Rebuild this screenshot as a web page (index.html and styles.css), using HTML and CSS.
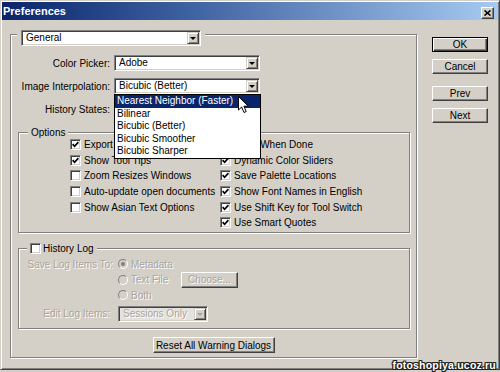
FILE: index.html
```html
<!DOCTYPE html>
<html lang="en">
<head>
    <meta charset="UTF-8">
    <title>Preferences</title>
    <link rel="stylesheet" href="styles.css">
</head>
<body>
    <div class="dialog">
        <div class="titlebar">
            <span class="title">Preferences</span>
            <span class="close">
                <svg width="7" height="6" viewBox="0 0 7 6"><path d="M0.5 0.5 L6.5 5.5 M6.5 0.5 L0.5 5.5" stroke="#000" stroke-width="1.6" fill="none"/></svg>
            </span>
        </div>
        <div class="content">
            <div class="frame">
                <div class="frame-head">
                    <div class="combo combo-general"><span class="combo-text">General</span><span class="combo-btn"></span></div>
                </div>
                <div class="form">
                    <div class="form-row">
                        <span class="form-label">Color Picker:</span>
                        <div class="combo combo-wide"><span class="combo-text">Adobe</span><span class="combo-btn"></span></div>
                    </div>
                    <div class="form-row">
                        <span class="form-label">Image Interpolation:</span>
                        <div class="combo combo-wide combo-open">
                            <span class="combo-text">Bicubic (Better)</span><span class="combo-btn"></span>
                            <ul class="droplist">
                                <li class="droplist-item is-selected">Nearest Neighbor (Faster)</li>
                                <li class="droplist-item">Bilinear</li>
                                <li class="droplist-item">Bicubic (Better)</li>
                                <li class="droplist-item">Bicubic Smoother</li>
                                <li class="droplist-item">Bicubic Sharper</li>
                            </ul>
                        </div>
                    </div>
                    <div class="form-row">
                        <span class="form-label">History States:</span>
                        <div class="field"></div>
                    </div>
                </div>

                <div class="group group-options">
                    <div class="legend">Options</div>
                    <div class="checks">
                        <div class="check-col">
                            <div class="check-item"><span class="check is-checked"><svg width="7" height="7" viewBox="0 0 7 7"><path d="M0.6 3.2 L2.6 5.3 L6.4 1.2" stroke="#000" stroke-width="1.7" fill="none"/></svg></span>Export Clipboard</div>
                            <div class="check-item"><span class="check is-checked"><svg width="7" height="7" viewBox="0 0 7 7"><path d="M0.6 3.2 L2.6 5.3 L6.4 1.2" stroke="#000" stroke-width="1.7" fill="none"/></svg></span>Show Tool Tips</div>
                            <div class="check-item"><span class="check"></span>Zoom Resizes Windows</div>
                            <div class="check-item"><span class="check"></span>Auto-update open documents</div>
                            <div class="check-item"><span class="check"></span>Show Asian Text Options</div>
                        </div>
                        <div class="check-col">
                            <div class="check-item"><span class="check is-checked"><svg width="7" height="7" viewBox="0 0 7 7"><path d="M0.6 3.2 L2.6 5.3 L6.4 1.2" stroke="#000" stroke-width="1.7" fill="none"/></svg></span>Beep When Done</div>
                            <div class="check-item"><span class="check is-checked"><svg width="7" height="7" viewBox="0 0 7 7"><path d="M0.6 3.2 L2.6 5.3 L6.4 1.2" stroke="#000" stroke-width="1.7" fill="none"/></svg></span>Dynamic Color Sliders</div>
                            <div class="check-item"><span class="check is-checked"><svg width="7" height="7" viewBox="0 0 7 7"><path d="M0.6 3.2 L2.6 5.3 L6.4 1.2" stroke="#000" stroke-width="1.7" fill="none"/></svg></span>Save Palette Locations</div>
                            <div class="check-item"><span class="check is-checked"><svg width="7" height="7" viewBox="0 0 7 7"><path d="M0.6 3.2 L2.6 5.3 L6.4 1.2" stroke="#000" stroke-width="1.7" fill="none"/></svg></span>Show Font Names in English</div>
                            <div class="check-item"><span class="check is-checked"><svg width="7" height="7" viewBox="0 0 7 7"><path d="M0.6 3.2 L2.6 5.3 L6.4 1.2" stroke="#000" stroke-width="1.7" fill="none"/></svg></span>Use Shift Key for Tool Switch</div>
                            <div class="check-item"><span class="check is-checked"><svg width="7" height="7" viewBox="0 0 7 7"><path d="M0.6 3.2 L2.6 5.3 L6.4 1.2" stroke="#000" stroke-width="1.7" fill="none"/></svg></span>Use Smart Quotes</div>
                        </div>
                    </div>
                </div>

                <div class="group group-log">
                    <div class="legend legend-check"><span class="check"></span>History Log</div>
                    <div class="log-grid">
                        <span class="log-label disabled">Save Log Items To:</span>
                        <div class="radio-list">
                            <div class="radio-item"><span class="radio is-on"></span><span class="radio-text disabled">Metadata</span></div>
                            <div class="radio-item"><span class="radio"></span><span class="radio-text disabled">Text File</span><span class="btn btn-choose disabled">Choose...</span></div>
                            <div class="radio-item"><span class="radio"></span><span class="radio-text disabled">Both</span></div>
                        </div>
                        <span class="log-label log-label-edit disabled">Edit Log Items:</span>
                        <div class="combo combo-log"><span class="combo-text disabled">Sessions Only</span><span class="combo-btn combo-btn-off"></span></div>
                    </div>
                </div>

                <div class="reset-row">
                    <span class="btn btn-reset">Reset All Warning Dialogs</span>
                </div>
            </div>

            <div class="side">
                <span class="btn btn-side btn-default">OK</span>
                <span class="btn btn-side">Cancel</span>
                <span class="btn btn-side btn-gap">Prev</span>
                <span class="btn btn-side">Next</span>
            </div>
        </div>

        <svg class="cursor" width="12" height="18" viewBox="0 0 12 18"><path d="M0.5 0.5 L0.5 14 L3.6 11 L6 16.5 L8.2 15.5 L5.9 10.2 L10.3 10.2 Z" fill="#fff" stroke="#000" stroke-width="1"/></svg>
        <div class="watermark">fotoshopiya.ucoz.ru</div>
    </div>
</body>
</html>
```

FILE: styles.css
```css
html, body {
    margin: 0;
    width: 500px;
    height: 372px;
    overflow: hidden;
}
body {
    background: #d4d0c8;
    font-family: "Liberation Sans", Arial, sans-serif;
    font-size: 10px;
    color: #000;
}
.dialog {
    position: relative;
    box-sizing: border-box;
    width: 500px;
    height: 370px;
    background: #d4d0c8;
    border: 1px solid;
    border-color: #d4d0c8 #404040 #404040 #d4d0c8;
    box-shadow: inset 1px 1px #fff, inset -1px -1px #808080;
}

/* title bar */
.titlebar {
    display: flex;
    align-items: center;
    height: 18px;
    margin: 1px 1px 0;
    padding: 0 4px 0 1px;
    background: linear-gradient(90deg, #0a246a 0%, #3a5d9e 35%, #a6caf0 100%);
}
.title {
    color: #fff;
    font-weight: bold;
    font-size: 11px;
}
.close {
    margin-left: auto;
    margin-top: 3px;
    box-sizing: border-box;
    width: 13px;
    height: 12px;
    display: flex;
    align-items: center;
    justify-content: center;
    background: #d4d0c8;
    border: 1px solid;
    border-color: #fff #404040 #404040 #fff;
    box-shadow: inset -1px -1px #808080;
}

.content {
    display: flex;
    padding: 14px 0 0 9px;
}

/* main group frame */
.frame {
    box-sizing: border-box;
    width: 407px;
    height: 324px;
    border: 1px solid #808080;
    box-shadow: inset 1px 1px #fff, 1px 1px #fff;
}
.frame-head {
    display: flex;
    margin-top: -5px;
    padding-left: 10px;
}

/* combo boxes */
.combo {
    position: relative;
    box-sizing: border-box;
    display: flex;
    align-items: center;
    height: 16px;
    padding: 1px;
    background: #fff;
    border: 1px solid;
    border-color: #808080 #fff #fff #808080;
    box-shadow: inset 1px 1px #404040, inset -1px -1px #d4d0c8;
}
.combo-general {
    width: 180px;
    outline: 4px solid #d4d0c8;
}
.combo-wide {
    width: 146px;
}
.combo-log {
    width: 90px;
    background: #e4e2dc;
}
.combo-text {
    padding-left: 3px;
    line-height: 12px;
    white-space: nowrap;
}
.combo-btn {
    margin-left: auto;
    box-sizing: border-box;
    width: 12px;
    height: 12px;
    display: flex;
    align-items: center;
    justify-content: center;
    background: #d4d0c8;
    border: 1px solid;
    border-color: #d4d0c8 #404040 #404040 #d4d0c8;
    box-shadow: inset 1px 1px #fff, inset -1px -1px #808080;
}
.combo-btn::after {
    content: "";
    border-left: 3px solid transparent;
    border-right: 3px solid transparent;
    border-top: 3px solid #000;
}
.combo-btn-off::after {
    border-top-color: #a8a49c;
}

.droplist {
    position: absolute;
    top: 15px;
    left: -1px;
    z-index: 2;
    box-sizing: border-box;
    width: 147px;
    margin: 0;
    padding: 0;
    list-style: none;
    background: #fff;
    border: 1px solid #000;
}
.droplist-item {
    height: 12.5px;
    line-height: 12.5px;
    padding-left: 2px;
    white-space: nowrap;
}
.droplist-item.is-selected {
    background: #0a246a;
    color: #fff;
}

/* label rows */
.form {
    display: flex;
    flex-direction: column;
    gap: 7px;
    margin-top: 9px;
}
.form-row {
    display: flex;
    align-items: center;
    height: 16px;
}
.form-label {
    box-sizing: border-box;
    width: 103px;
    padding-right: 4px;
    text-align: right;
    white-space: nowrap;
}
.field {
    box-sizing: border-box;
    width: 40px;
    height: 16px;
    background: #fff;
    border: 1px solid;
    border-color: #808080 #fff #fff #808080;
}

/* group boxes */
.group {
    box-sizing: border-box;
    display: flex;
    flex-direction: column;
    margin: 15px 6px 0 7px;
    border: 1px solid #808080;
    box-shadow: inset 1px 1px #fff, 1px 1px #fff;
}
.group-options {
    height: 101px;
}
.group-log {
    height: 81px;
}
.legend {
    align-self: flex-start;
    display: flex;
    align-items: center;
    gap: 2px;
    height: 12px;
    margin: -7px 0 0 9px;
    padding: 0 3px;
    background: #d4d0c8;
}
.legend-check {
    margin-left: 8px;
}

/* checkboxes */
.checks {
    display: flex;
    margin-top: -1px;
    padding-left: 51px;
}
.check-col {
    display: flex;
    flex-direction: column;
}
.check-col:first-child {
    width: 150px;
}
.check-item {
    display: flex;
    align-items: center;
    gap: 3px;
    height: 15.6px;
    white-space: nowrap;
}
.check {
    box-sizing: border-box;
    flex: none;
    width: 11px;
    height: 11px;
    display: flex;
    align-items: center;
    justify-content: center;
    background: #fff;
    border: 1px solid;
    border-color: #808080 #fff #fff #808080;
    box-shadow: inset 1px 1px #404040, inset -1px -1px #d4d0c8;
}

/* history log */
.log-grid {
    display: grid;
    grid-template-columns: 94px auto;
    column-gap: 5px;
    row-gap: 3px;
    margin-top: 2.5px;
}
.log-label {
    height: 15.5px;
    line-height: 15.5px;
    text-align: right;
    white-space: nowrap;
}
.log-label-edit {
    height: 16px;
    line-height: 16px;
    padding-right: 3px;
}
.disabled {
    color: #a8a49c;
    text-shadow: 1px 1px 0 #fff;
}
.radio-list {
    display: flex;
    flex-direction: column;
}
.radio-item {
    display: flex;
    align-items: center;
    gap: 3px;
    height: 15.5px;
}
.radio {
    box-sizing: border-box;
    flex: none;
    width: 10px;
    height: 10px;
    display: flex;
    align-items: center;
    justify-content: center;
    border-radius: 50%;
    border: 1px solid;
    border-color: #808080 #fff #fff #808080;
    background: #d4d0c8;
}
.radio.is-on::after {
    content: "";
    width: 4px;
    height: 4px;
    border-radius: 50%;
    background: #808080;
}
.radio-text {
    width: 47px;
    white-space: nowrap;
}

/* buttons */
.btn {
    box-sizing: border-box;
    display: flex;
    align-items: center;
    justify-content: center;
    height: 15px;
    background: #d4d0c8;
    border: 1px solid;
    border-color: #fff #404040 #404040 #fff;
    box-shadow: inset -1px -1px #808080;
    white-space: nowrap;
}
.btn-choose {
    width: 57px;
    height: 16px;
}
.reset-row {
    display: flex;
    justify-content: center;
    margin-top: 8px;
}
.btn-reset {
    width: 122px;
    height: 16px;
}
.side {
    display: flex;
    flex-direction: column;
    gap: 7px;
    margin-left: 15px;
    padding-top: 3px;
}
.btn-side {
    width: 56px;
}
.btn-default {
    border-color: #000;
    box-shadow: inset 1px 1px #fff, inset -1px -1px #404040, inset -2px -2px #808080;
}
.btn-gap {
    margin-top: 5px;
}

.cursor {
    position: absolute;
    left: 237px;
    top: 95px;
    z-index: 3;
}
.watermark {
    position: absolute;
    right: 3px;
    bottom: -2px;
    font-size: 10.5px;
    font-weight: bold;
    color: #fff;
    letter-spacing: 0.2px;
    text-shadow: 1px 0 #222, -1px 0 #222, 0 1px #222, 0 -1px #222, 1px 1px #222, -1px -1px #222, 1px -1px #222, -1px 1px #222;
}
```
